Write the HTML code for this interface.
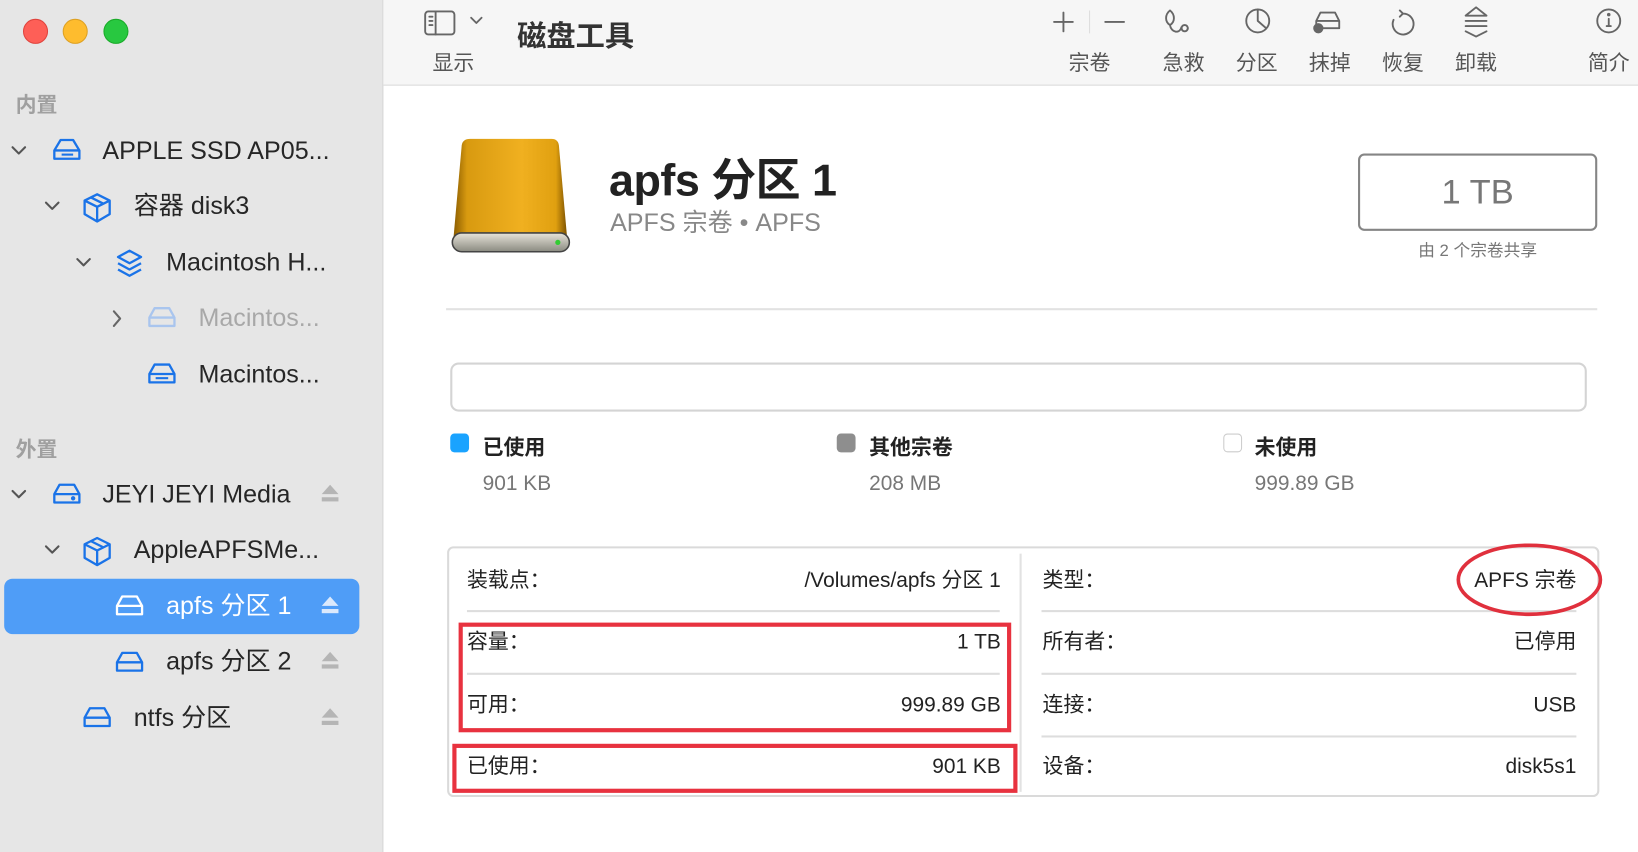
<!DOCTYPE html>
<html><head><meta charset="utf-8"><style>
html,body{margin:0;padding:0;width:1638px;height:852px;overflow:hidden;background:#fff}
#w{position:absolute;left:0;top:0;width:1568px;height:816px;transform:scale(1.04464);transform-origin:0 0;font-family:"Liberation Sans","Noto Sans CJK SC",sans-serif;color:#222}
.a{position:absolute;white-space:nowrap}
.sb{position:absolute;left:0;top:0;width:366px;height:816px;background:#e6e6e6;border-right:1px solid #d6d6d6}
.dot{position:absolute;width:24px;height:24px;border-radius:50%;top:18px}
.hd{font-size:20px;color:#a0a0a0;font-weight:bold}
.row{font-size:24px;color:#262626;line-height:30px}
.lbl{font-size:20px;color:#555;line-height:24px;text-align:center;width:60px}
.t{font-size:20px;color:#222;line-height:24px}
</style></head><body><div id="w">
<div class="sb"></div>
<div class="dot" style="left:22px;background:#fe5f57;border:1px solid #e0443e;width:22px;height:22px"></div>
<div class="dot" style="left:60px;background:#febc2e;border:1px solid #dea123;width:22px;height:22px"></div>
<div class="dot" style="left:99px;background:#28c840;border:1px solid #1aab29;width:22px;height:22px"></div>
<div class="a hd" style="left:15px;top:84px">内置</div>
<div class="a hd" style="left:15px;top:414px">外置</div>

<svg class="a" style="left:0;top:0" width="366" height="816">
<g fill="none" stroke="#555" stroke-width="2" stroke-linecap="round" stroke-linejoin="round">
<path d="M12 141l6 6 6-6"/><path d="M44 194l6 6 6-6"/><path d="M74 248l6 6 6-6"/>
<path d="M109 298l6 7-6 7" stroke="#666"/>
<path d="M12 470l6 6 6-6"/><path d="M44 523l6 6 6-6"/>
</g>
<g fill="none" stroke="#1a73e8" stroke-width="2.2" stroke-linejoin="round">
<path d="M52 152v-8l6-10h12l6 10v8z M52 144h24"/><path d="M59 148h11" stroke-width="2"/>
<path d="M93 186l12 6v13l-12 7-12-7v-13z M81 192l12 6 12-6 M93 198v14 M87 189l12 6"/>
<path d="M124 240l11 6-11 6-11-6z M113 252l11 6 11-6 M113 258l11 6 11-6"/>
<g stroke="#a9c5ee"><path d="M143 312v-8l5-9h14l5 9v8z M143 304h24"/></g>
<path d="M143 366v-8l5-9h14l5 9v8z M143 358h24"/><path d="M149 362h12" stroke-width="2"/>
<path d="M52 481v-8l5-9h14l5 9v8z M52 473h24"/><circle cx="70" cy="477" r="1" fill="#1a73e8"/>
<path d="M93 515l12 6v13l-12 7-12-7v-13z M81 521l12 6 12-6 M93 527v14 M87 518l12 6"/>
</g>
<rect x="4" y="554" width="340" height="53" rx="8" fill="#4f9df7"/>
<g fill="none" stroke="#fff" stroke-width="2.2" stroke-linejoin="round"><path d="M112 588v-8l5-9h14l5 9v8z M112 580h24"/></g>
<g fill="none" stroke="#1a73e8" stroke-width="2.2" stroke-linejoin="round">
<path d="M112 642v-8l5-9h14l5 9v8z M112 634h24"/><path d="M81 695v-8l5-9h14l5 9v8z M81 687h24"/>
</g>
<g fill="#b5b5b5"><path d="M316 464l8 9h-16z"/><rect x="308" y="476" width="16" height="4"/>
<path d="M316 624l8 9h-16z"/><rect x="308" y="636" width="16" height="4"/>
<path d="M316 678l8 9h-16z"/><rect x="308" y="690" width="16" height="4"/></g>
<g fill="#dbe9fc"><path d="M316 571l8 9h-16z"/><rect x="308" y="583" width="16" height="4"/></g>
</svg>
<div class="a row" style="left:98px;top:130px">APPLE SSD AP05...</div>
<div class="a row" style="left:128px;top:183px">容器 disk3</div>
<div class="a row" style="left:159px;top:237px">Macintosh H...</div>
<div class="a row" style="left:190px;top:290px;color:#a8a8a8">Macintos...</div>
<div class="a row" style="left:190px;top:344px">Macintos...</div>
<div class="a row" style="left:98px;top:459px">JEYI JEYI Media</div>
<div class="a row" style="left:128px;top:512px">AppleAPFSMe...</div>
<div class="a row" style="left:159px;top:566px;color:#fff">apfs 分区 1</div>
<div class="a row" style="left:159px;top:619px">apfs 分区 2</div>
<div class="a row" style="left:128px;top:673px">ntfs 分区</div>

<div class="a" style="left:367px;top:0;width:1201px;height:81px;background:#f6f6f6;border-bottom:1px solid #dadada"></div>
<svg class="a" style="left:367px;top:0" width="1201" height="81">
<g fill="none" stroke="#666" stroke-width="1.8" stroke-linecap="round" stroke-linejoin="round">
<rect x="40" y="11" width="28" height="22" rx="3"/><path d="M50 11v22 M44 16h3 M44 20h3 M44 24h3"/>
<path d="M84 17l5 5 5-5"/>
<path d="M651 12v18 M642 21h18"/><path d="M691 21h18"/>
<path d="M753 10c-5 4-5 11 0 14 5-3 5-10 0-14 M753 24c1 7 9 9 11 2 M767 24a3 3 0 1 0 0.1 0"/>
<circle cx="837" cy="20" r="11"/><path d="M837 9v11l8 7"/>
<path d="M893 20l4-8h14l4 8v7h-22z M893 20h22"/><circle cx="895" cy="27" r="4" fill="#666"/>
<path d="M973 10l3 3-3 3 M976 13a10 10 0 1 1-9 6"/>
<path d="M1046 7l-10 8h20z M1036 20h20 M1036 25h20 M1036 30l10 5 10-5"/>
<circle cx="1173" cy="20" r="11"/><path d="M1173 18v7 M1171 25h4"/><circle cx="1173" cy="14" r="0.8" fill="#666"/>
</g>
<path d="M676 10v22" stroke="#ddd"/>
</svg>
<div class="a" style="left:495px;top:13px;font-size:28px;font-weight:bold;color:#333">磁盘工具</div>
<div class="a lbl" style="left:404px;top:49px">显示</div>
<div class="a lbl" style="left:1013px;top:49px">宗卷</div>
<div class="a lbl" style="left:1103px;top:49px">急救</div>
<div class="a lbl" style="left:1173px;top:49px">分区</div>
<div class="a lbl" style="left:1243px;top:49px">抹掉</div>
<div class="a lbl" style="left:1313px;top:49px">恢复</div>
<div class="a lbl" style="left:1383px;top:49px">卸载</div>
<div class="a lbl" style="left:1510px;top:49px">简介</div>

<svg class="a" style="left:428px;top:128px" width="122" height="120">
<defs><linearGradient id="g" x1="0" x2="1"><stop offset="0" stop-color="#8a5c00"/><stop offset=".12" stop-color="#d89a10"/><stop offset=".6" stop-color="#f0b020"/><stop offset=".9" stop-color="#e0a010"/><stop offset="1" stop-color="#7a5000"/></linearGradient>
<linearGradient id="h" y1="0" y2="1" x1="0" x2="0"><stop offset="0" stop-color="#e8e4da"/><stop offset="1" stop-color="#8a8a80"/></linearGradient></defs>
<path d="M22 5h78q6 0 7 6l8 90H6l8-90q1-6 8-6z" fill="url(#g)"/>
<rect x="5" y="95" width="112" height="18" rx="9" fill="url(#h)" stroke="#444" stroke-width="1.5"/>
<circle cx="106" cy="104" r="2.5" fill="#3c3"/>
</svg>
<div class="a" style="left:583px;top:138px;font-size:43px;font-weight:bold;color:#222;letter-spacing:-0.5px">apfs 分区 1</div>
<div class="a" style="left:584px;top:193px;font-size:24px;color:#888">APFS 宗卷 • APFS</div>
<div class="a" style="left:1300px;top:147px;width:225px;height:70px;border:2px solid #858585;border-radius:6px;text-align:center;line-height:70px;font-size:33px;color:#777">1 TB</div>
<div class="a" style="left:1300px;top:226px;width:229px;text-align:center;font-size:16px;color:#777">由 2 个宗卷共享</div>
<div class="a" style="left:427px;top:295px;width:1102px;height:2px;background:#e2e2e2"></div>
<div class="a" style="left:431px;top:347px;width:1084px;height:43px;border:2px solid #d4d4d4;border-radius:8px"></div>

<div class="a" style="left:431px;top:415px;width:18px;height:18px;border-radius:4px;background:#1aa3ff"></div>
<div class="a" style="left:801px;top:415px;width:18px;height:18px;border-radius:4px;background:#8e8e8e"></div>
<div class="a" style="left:1171px;top:415px;width:16px;height:16px;border-radius:4px;border:1px solid #ccc"></div>
<div class="a" style="left:462px;top:412px;font-size:20px;font-weight:bold">已使用</div>
<div class="a" style="left:832px;top:412px;font-size:20px;font-weight:bold">其他宗卷</div>
<div class="a" style="left:1201px;top:412px;font-size:20px;font-weight:bold">未使用</div>
<div class="a" style="left:462px;top:452px;font-size:20px;color:#777">901 KB</div>
<div class="a" style="left:832px;top:452px;font-size:20px;color:#777">208 MB</div>
<div class="a" style="left:1201px;top:452px;font-size:20px;color:#777">999.89 GB</div>

<div class="a" style="left:428px;top:523px;width:1099px;height:236px;border:2px solid #dadada;border-radius:6px"></div>
<div class="a" style="left:976px;top:530px;width:2px;height:228px;background:#e2e2e2"></div>
<div class="a" style="left:447px;top:584px;width:510px;height:2px;background:#ddd"></div>
<div class="a" style="left:447px;top:644px;width:510px;height:2px;background:#ddd"></div>
<div class="a" style="left:997px;top:584px;width:512px;height:2px;background:#ddd"></div>
<div class="a" style="left:997px;top:644px;width:512px;height:2px;background:#ddd"></div>
<div class="a" style="left:997px;top:704px;width:512px;height:2px;background:#ddd"></div>

<div class="a t" style="left:447px;top:544px">装载点：</div>
<div class="a t" style="left:447px;top:603px">容量：</div>
<div class="a t" style="left:447px;top:663px">可用：</div>
<div class="a t" style="left:447px;top:722px">已使用：</div>
<div class="a t" style="right:610px;top:544px">/Volumes/apfs 分区 1</div>
<div class="a t" style="right:610px;top:603px">1 TB</div>
<div class="a t" style="right:610px;top:663px">999.89 GB</div>
<div class="a t" style="right:610px;top:722px">901 KB</div>
<div class="a t" style="left:998px;top:544px">类型：</div>
<div class="a t" style="left:998px;top:603px">所有者：</div>
<div class="a t" style="left:998px;top:663px">连接：</div>
<div class="a t" style="left:998px;top:722px">设备：</div>
<div class="a t" style="right:59px;top:544px">APFS 宗卷</div>
<div class="a t" style="right:59px;top:603px">已停用</div>
<div class="a t" style="right:59px;top:663px">USB</div>
<div class="a t" style="right:59px;top:722px">disk5s1</div>

<div class="a" style="left:439px;top:596px;width:521px;height:97px;border:4px solid #e8323f"></div>
<div class="a" style="left:433px;top:712px;width:533px;height:39px;border:4px solid #e8323f"></div>
<svg class="a" style="left:1390px;top:518px" width="150" height="76"><ellipse cx="74" cy="37" rx="68" ry="33" fill="none" stroke="#e0303d" stroke-width="3.5"/></svg>
</div></body></html>
